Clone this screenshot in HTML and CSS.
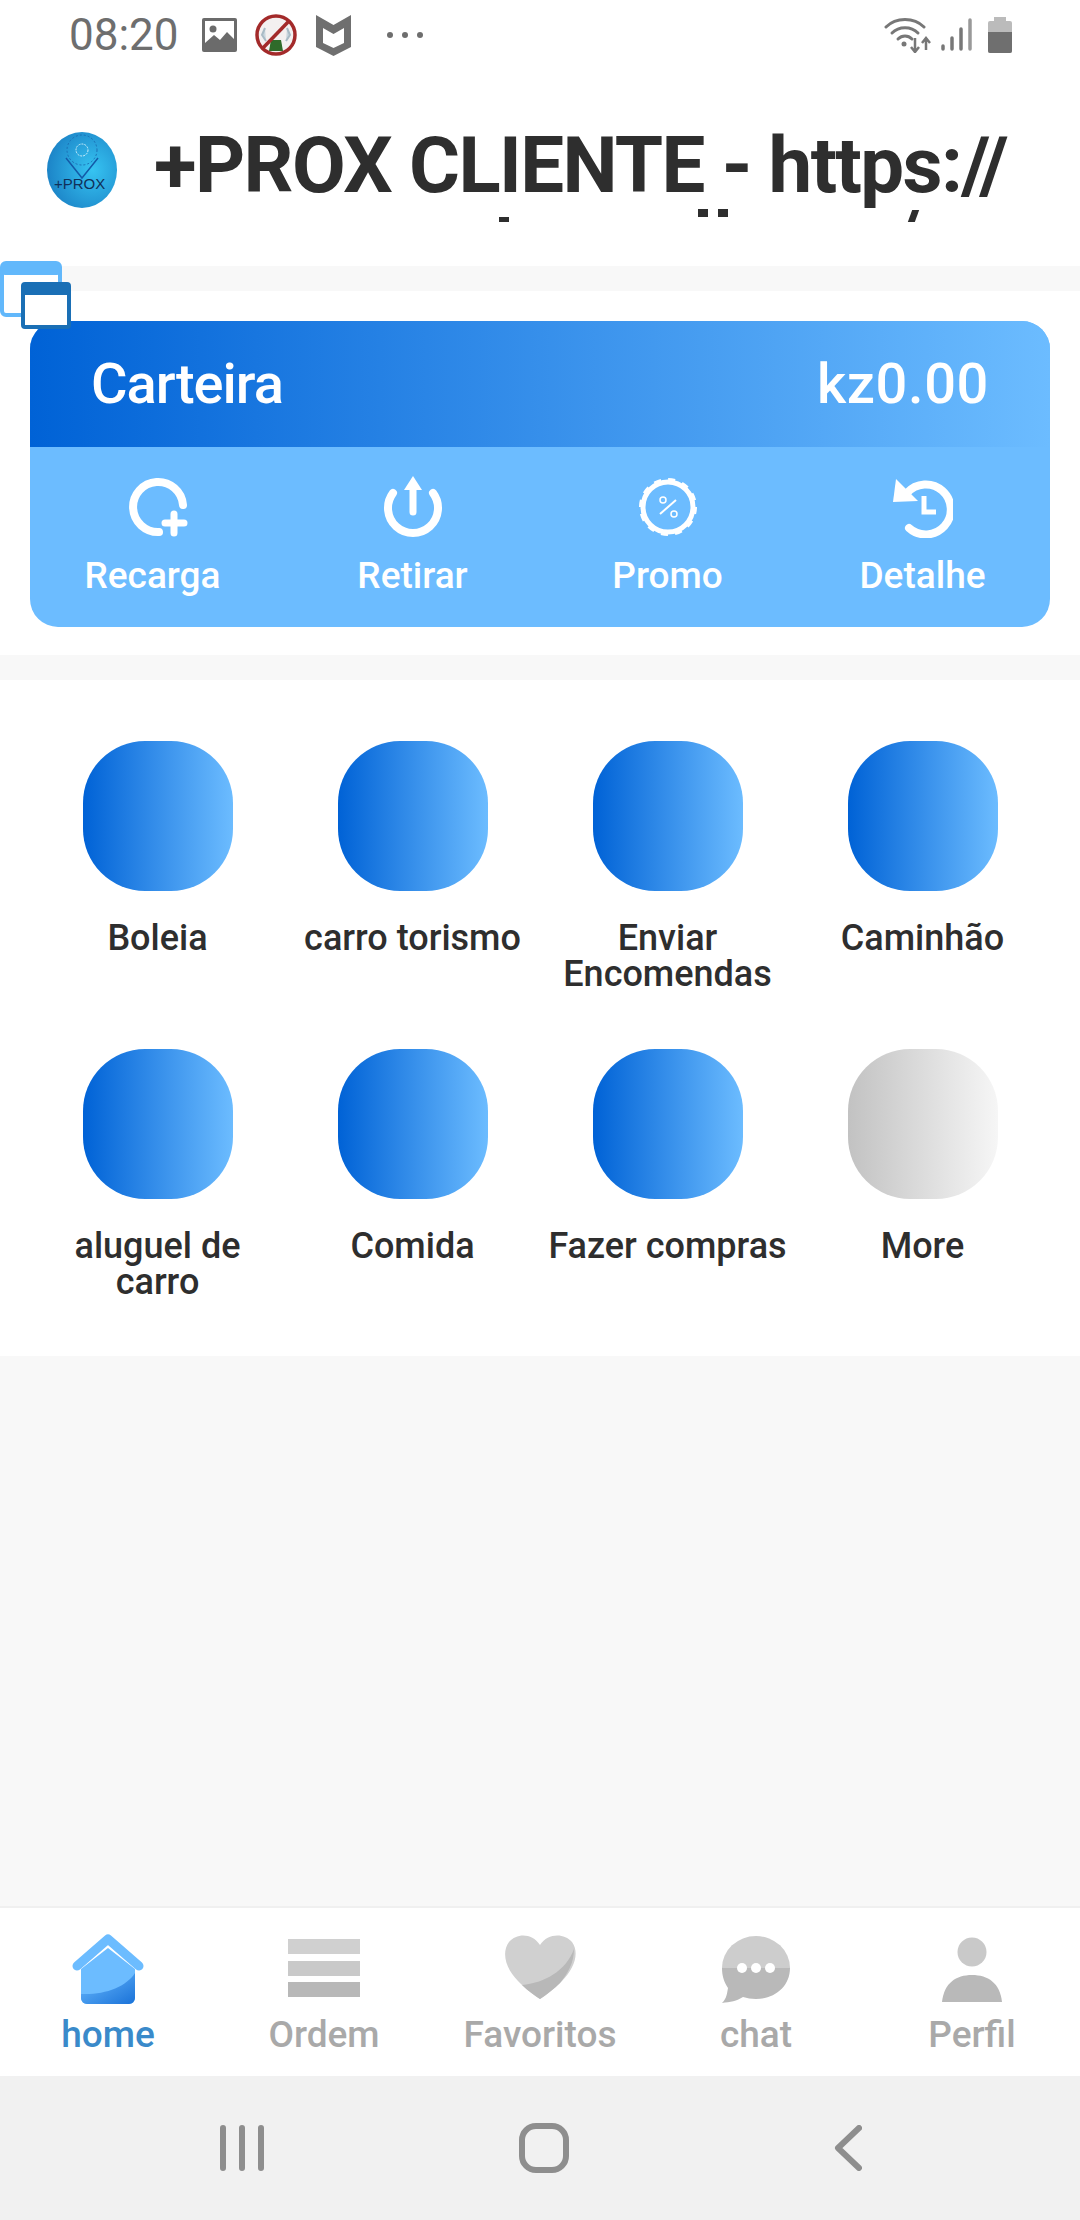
FILE: index.html

```html
<!DOCTYPE html>
<html>
<head lang="pt">
    <meta charset="UTF-8">
    <title>+PROX CLIENTE</title>
    <link rel="stylesheet" href="styles.css">
</head>

<body>
<div id="page">
    <div class="status">
        <span class="time">08:20</span>
        <svg class="st-img" viewBox="0 0 35 34"><rect width="35" height="34" rx="2" fill="#6b6b6b"/><rect x="3" y="3" width="29" height="24" fill="#fff"/><circle cx="11" cy="11" r="3.5" fill="#6b6b6b"/><path d="M3 25 L12 17 L18 22 L25 14 L32 21 V31 H3Z" fill="#6b6b6b"/></svg>
        <svg class="st-block" viewBox="0 0 42 42"><circle cx="21" cy="21" r="19" fill="#f3f0f0" stroke="#a32a2a" stroke-width="3.5"/><path d="M10 14 L7 21 L11 27 M32 14 L35 21 L31 27" fill="#c9d6de" stroke="#a9bbc6" stroke-width="2"/><path d="M14 37 L16 26 H26 L28 37Z" fill="#2f6b2a"/><path d="M7 8 L35 35" transform="rotate(90 21 21)" stroke="#a32a2a" stroke-width="3.5"/></svg>
        <svg class="st-shield" viewBox="0 0 35 41"><path d="M0 0 L17.500 10 L35 0 V32 L17.500 41 L0 32Z" fill="#6f6f6f"/><path d="M7 13 L17.500 19 L28 13 V28 L17.500 33 L7 28Z" fill="#fff"/></svg>
        <span class="st-dots"><i></i><i></i><i></i></span>
        <svg class="st-wifi" viewBox="0 0 47 36"><g fill="none" stroke="#777" stroke-width="3" stroke-linecap="round"><path d="M2 10 C12 0 30 0 40 10"/><path d="M8 16 C15 9 27 9 34 16"/><path d="M14 22 C18 18 24 18 28 22"/></g><circle cx="20" cy="27" r="2.500" fill="#777"/><path d="M31 21 V34 M27 30 L31 35 L35 30 M42 33 V22 M38 26 L42 21 L46 26" fill="none" stroke="#777" stroke-width="2.500"/></svg>
        <svg class="st-signal" viewBox="0 0 31 34"><g stroke-width="3.500" stroke-linecap="round"><path d="M2 31 V28" stroke="#777"/><path d="M11 31 V20" stroke="#777"/><path d="M20 31 V11" stroke="#777"/><path d="M29 31 V2" stroke="#999"/></g></svg>
        <svg class="st-batt" viewBox="0 0 24 36"><rect x="6" width="12" height="5" fill="#bbb"/><rect y="4" width="24" height="32" rx="2" fill="#bbb"/><path d="M0 15 H24 V34 a2 2 0 0 1 -2 2 H2 a2 2 0 0 1 -2 -2Z" fill="#6f6f6f"/></svg>
    </div>

    <div class="topbar">
        <svg class="logo" viewBox="0 0 70 76">
            <defs><radialGradient id="lg" cx="0.65" cy="0.5" r="0.7"><stop offset="0" stop-color="#36c4f2"/><stop offset="1" stop-color="#1a7fc4"/></radialGradient></defs>
            <ellipse cx="35" cy="38" rx="35" ry="38" fill="url(#lg)"/>
            <path d="M22 26 L38 46 L54 26" transform="translate(-3 0)" fill="none" stroke="#135aa8" stroke-width="1.500"/>
            <circle cx="35" cy="18" r="6" fill="none" stroke="#cfeffb" stroke-dasharray="2 1"/>
            <circle cx="35" cy="18" r="15" fill="none" stroke="#1b6fb5" stroke-dasharray="2 2"/>
            <text x="7" y="57" class="logo-text">+PROX</text>
        </svg>
        <div class="title-clip">
            <h1 class="title">+PROX CLIENTE - https://</h1>
            <span class="mark mark-a"></span>
            <span class="mark mark-b"></span>
            <span class="mark mark-c"></span>
            <span class="mark mark-d"></span>
        </div>
    </div>

    <svg class="float-win" viewBox="0 0 72 68">
        <rect x="2" y="2" width="58" height="52" rx="4" fill="#fff" stroke="#62b8fb" stroke-width="4"/>
        <rect x="2" y="2" width="58" height="12" rx="3" fill="#62b8fb"/>
        <rect x="23" y="23" width="46" height="43" rx="2" fill="#fff" stroke="#1a6fb5" stroke-width="4"/>
        <rect x="23" y="22" width="46" height="12" rx="2" fill="#1a6fb5"/>
    </svg>

    <div class="band"></div>

    <div class="wallet-wrap">
        <div class="wallet">
            <div class="wallet-head">
                <span class="wallet-name">Carteira</span>
                <span class="wallet-sum">kz0.00</span>
            </div>
            <div class="wallet-actions">
                <div class="action">
                    <svg viewBox="0 0 60 62"><path d="M31 56 A25 25 0 1 1 55 29" fill="none" stroke="#fff" stroke-width="8" stroke-linecap="round"/><path d="M46 38 V57 M37 47 H56" stroke="#fff" stroke-width="7" stroke-linecap="round"/></svg>
                    <span>Recarga</span>
                </div>
                <div class="action">
                    <svg viewBox="0 0 60 62"><path d="M10 17 A25 25 0 1 0 50 17" fill="none" stroke="#fff" stroke-width="8" stroke-linecap="round"/><path d="M30 36 V12" stroke="#fff" stroke-width="7" stroke-linecap="round"/><path d="M21 14 L30 0 L39 14Z" fill="#fff"/></svg>
                    <span>Retirar</span>
                </div>
                <div class="action">
                    <svg viewBox="0 0 60 62"><circle cx="30" cy="31" r="25" fill="none" stroke="#fff" stroke-width="5"/><circle cx="30" cy="31" r="27" fill="none" stroke="#fff" stroke-width="4" stroke-dasharray="7 7.100"/><circle cx="25" cy="24" r="3" fill="none" stroke="#fff" stroke-width="1.500"/><circle cx="36" cy="38" r="3" fill="none" stroke="#fff" stroke-width="1.500"/><path d="M22 38 L38 24" stroke="#fff" stroke-width="2"/></svg>
                    <span>Promo</span>
                </div>
                <div class="action">
                    <svg viewBox="0 0 60 62"><path d="M14 17 A25 25 0 1 1 16 52" fill="none" stroke="#fff" stroke-width="8" stroke-linecap="round"/><path d="M3 3 L25 25 L0 26Z" fill="#fff"/><path d="M31 20 V36 H43" fill="none" stroke="#fff" stroke-width="5"/></svg>
                    <span>Detalhe</span>
                </div>
            </div>
        </div>
    </div>

    <div class="band"></div>

    <div class="menu">
        <div class="tile"><div class="tile-pic"></div><span>Boleia</span></div>
        <div class="tile"><div class="tile-pic"></div><span>carro torismo</span></div>
        <div class="tile"><div class="tile-pic"></div><span>Enviar Encomendas</span></div>
        <div class="tile"><div class="tile-pic"></div><span>Caminhão</span></div>
        <div class="tile"><div class="tile-pic"></div><span>aluguel de carro</span></div>
        <div class="tile"><div class="tile-pic"></div><span>Comida</span></div>
        <div class="tile"><div class="tile-pic"></div><span>Fazer compras</span></div>
        <div class="tile"><div class="tile-pic grey"></div><span>More</span></div>
    </div>

    <div class="filler"></div>

    <div class="tabs">
        <div class="tab on">
            <svg viewBox="0 0 72 72">
                <defs><linearGradient id="hm" x1="0" y1="0" x2="1" y2="1"><stop offset="0" stop-color="#6cbcff"/><stop offset="1" stop-color="#1a72d8"/></linearGradient></defs>
                <path d="M5 33 L36 6 L67 33" fill="none" stroke="#6cbcff" stroke-width="9" stroke-linecap="round" stroke-linejoin="round"/>
                <path d="M9 36 L36 15 L63 36 V65 a6 6 0 0 1 -6 6 H15 a6 6 0 0 1 -6 -6Z" fill="#6cbcff"/>
                <path d="M9 61 C33 62 54 54 63 40 V65 a6 6 0 0 1 -6 6 H15 a6 6 0 0 1 -6 -6Z" fill="url(#hm)"/>
            </svg>
            <span>home</span>
        </div>
        <div class="tab">
            <svg viewBox="0 0 72 72"><rect y="6" width="72" height="15" fill="#d0d0d0"/><rect y="28" width="72" height="15" fill="#c9c9c9"/><rect y="49" width="72" height="15" fill="#b8b8b8"/></svg>
            <span>Ordem</span>
        </div>
        <div class="tab">
            <svg viewBox="0 0 72 72"><path d="M36 12 C44 0 60 0 68 9 C76 20 70 36 58 48 C50 56 42 62 36 66 C30 62 22 56 14 48 C2 36 -3 20 5 9 C13 0 28 0 36 12Z" fill="#d0d0d0"/><path d="M70 16 C70 30 64 40 56 50 C50 56 42 62 36 66 C30 62 24 58 18 52 C40 50 62 38 70 16Z" fill="#b8b8b8"/></svg>
            <span>Favoritos</span>
        </div>
        <div class="tab">
            <svg viewBox="0 0 72 72"><path d="M2 35 A34 32 0 0 1 70 35Z" fill="#cdcdcd"/><path d="M2 35 H70 C70 54 54 66 36 66 C31 66 27 65 23 64 C17 68 10 69 2 70 C7 65 7 60 8 55 C4 49 2 43 2 35Z" fill="#b9b9b9"/><circle cx="22" cy="35" r="5" fill="#fff"/><circle cx="36" cy="35" r="5" fill="#fff"/><circle cx="50" cy="35" r="5" fill="#fff"/></svg>
            <span>chat</span>
        </div>
        <div class="tab">
            <svg viewBox="0 0 72 72"><circle cx="36" cy="19" r="14.500" fill="#c9c9c9"/><path d="M6 69 C8 50 20 42 36 42 C52 42 64 50 66 69Z" fill="#b9b9b9"/></svg>
            <span>Perfil</span>
        </div>
    </div>

    <div class="sysnav">
        <svg class="sys-recents" viewBox="0 0 44 46"><path d="M3 3 V43 M22 3 V43 M41 3 V43" stroke="#8e8e8e" stroke-width="6" stroke-linecap="round"/></svg>
        <svg class="sys-home" viewBox="0 0 50 50"><rect x="3" y="3" width="44" height="44" rx="14" fill="none" stroke="#8e8e8e" stroke-width="6"/></svg>
        <svg class="sys-back" viewBox="0 0 28 46"><path d="M25 3 L4 23 L25 43" fill="none" stroke="#8e8e8e" stroke-width="6" stroke-linecap="round" stroke-linejoin="round"/></svg>
    </div>
</div>
</body>
</html>
```

FILE: styles.css

```css
*{
    padding: 0;
    margin: 0;
    box-sizing: border-box;
}
body{
    font-family: Roboto, "Noto Sans", sans-serif;
    background: #fff;
}
svg{
    display: block;
}
#page{
    position: relative;
    width: 1080px;
    height: 2220px;
    display: flex;
    flex-direction: column;
    overflow: hidden;
    background: #fff;
}

/* status bar */
.status{
    height: 70px;
    display: flex;
    align-items: center;
    padding-left: 69px;
}
.time{
    font-size: 44px;
    color: #6e6e6e;
    width: 109px;
}
.st-img{ width: 35px; height: 34px; margin-left: 24px; }
.st-block{ width: 42px; height: 42px; margin-left: 18px; }
.st-shield{ width: 35px; height: 41px; margin-left: 19px; }
.st-dots{
    display: flex;
    gap: 9px;
    margin-left: 36px;
}
.st-dots i{
    width: 6px;
    height: 6px;
    border-radius: 50%;
    background: #6e6e6e;
}
.st-wifi{ width: 47px; height: 36px; margin-left: 461px; }
.st-signal{ width: 31px; height: 34px; margin-left: 10px; }
.st-batt{ width: 24px; height: 36px; margin-left: 16px; }

/* title bar */
.topbar{
    height: 196px;
    display: flex;
    align-items: flex-start;
    padding-left: 47px;
}
.logo{
    width: 70px;
    height: 76px;
    margin-top: 62px;
}
.logo-text{
    font-size: 15px;
    fill: #10305a;
    font-family: "Liberation Sans", sans-serif;
}
.title-clip{
    position: relative;
    width: 880px;
    height: 152px;
    margin-left: 37px;
    overflow: hidden;
}
.title{
    font-size: 78px;
    font-weight: 700;
    line-height: 152px;
    height: 152px;
    margin-top: 20px;
    color: #2e2e2e;
    white-space: nowrap;
    letter-spacing: -1.600px;
}
.mark{
    position: absolute;
    background: #2e2e2e;
    height: 8px;
    width: 10px;
    top: 139px;
}
.mark-a{ left: 345px; top: 147px; height: 5px; }
.mark-b{ left: 544px; }
.mark-c{ left: 564px; }
.mark-d{ left: 756px; top: 140px; height: 12px; width: 7px; transform: skewX(-20deg); }

.float-win{
    position: absolute;
    left: 0;
    top: 261px;
    width: 72px;
    height: 68px;
}

.band{
    height: 25px;
    background: #f8f8f8;
}

/* wallet */
.wallet-wrap{
    height: 364px;
    padding: 30px 30px 0;
}
.wallet{
    height: 306px;
    border-radius: 28px;
    background: #6cbcff;
    overflow: hidden;
}
.wallet-head{
    height: 126px;
    padding: 0 61px;
    display: flex;
    justify-content: space-between;
    align-items: center;
    background: linear-gradient(90deg, #0062d6, #6cbcff);
    color: #fff;
    font-size: 56px;
    font-weight: 500;
}
.wallet-name{
    letter-spacing: -1px;
}
.wallet-sum{
    letter-spacing: 0.600px;
}
.wallet-actions{
    display: grid;
    grid-template-columns: repeat(4, 1fr);
    padding-top: 29px;
}
.action{
    display: flex;
    flex-direction: column;
    align-items: center;
    color: #fff;
    font-size: 37px;
    font-weight: 500;
}
.action svg{
    width: 60px;
    height: 62px;
    margin-bottom: 16px;
}
.action:first-child span{
    margin-right: 10px;
}

/* menu */
.menu{
    height: 676px;
    display: grid;
    grid-template-columns: repeat(4, 255px);
    grid-template-rows: 308px 308px;
    padding: 61px 30px 0;
}
.tile{
    display: flex;
    flex-direction: column;
    align-items: center;
    text-align: center;
    font-size: 36px;
    font-weight: 500;
    line-height: 36px;
    color: #2e2e2e;
}
.tile-pic{
    width: 150px;
    height: 150px;
    flex: none;
    margin-bottom: 29px;
    border-radius: 62px;
    background: linear-gradient(90deg, #0062d6, #6cbcff);
}
.tile-pic.grey{
    background: linear-gradient(90deg, #c2c2c2, #f6f6f6);
}
.filler{
    flex: 1;
    background: #f8f8f8;
}

/* bottom tabs */
.tabs{
    height: 170px;
    display: grid;
    grid-template-columns: repeat(5, 1fr);
    border-top: 2px solid #f0f0f0;
    padding-top: 25px;
    background: #fff;
}
.tab{
    display: flex;
    flex-direction: column;
    align-items: center;
    font-size: 37px;
    font-weight: 500;
    line-height: 44px;
    color: #a9a9a9;
}
.tab.on{
    color: #3a8aca;
}
.tab svg{
    width: 72px;
    height: 72px;
    margin-bottom: 8px;
}

/* android nav */
.sysnav{
    height: 144px;
    background: #f1f1f1;
    display: flex;
    align-items: center;
    padding-left: 220px;
}
.sys-recents{ width: 44px; height: 46px; }
.sys-home{ width: 50px; height: 50px; margin-left: 255px; }
.sys-back{ width: 28px; height: 46px; margin-left: 265px; }
```
